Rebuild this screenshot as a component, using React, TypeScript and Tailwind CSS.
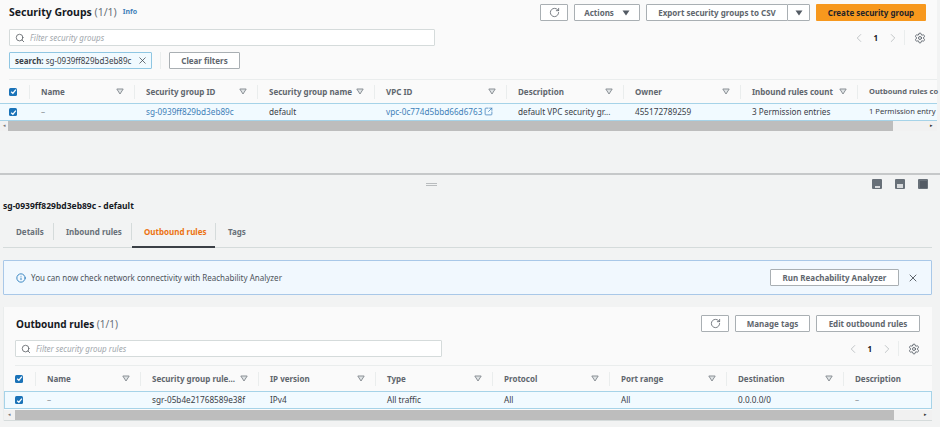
import { ChevronLeft, ChevronRight, Search, Settings, X, Info, RotateCw, SquareArrowOutUpRight } from "lucide-react";
import type { ReactNode } from "react";

function SortIcon() {
  return (
    <svg width="8" height="7" viewBox="0 0 8 7" className="shrink-0">
      <path d="M0.8 1 H7.2 L4 6 Z" fill="#dfe3e5" stroke="#8b9196" strokeWidth="1" />
    </svg>
  );
}

function Caret() {
  return (
    <svg width="8" height="6" viewBox="0 0 8 6" className="shrink-0">
      <path d="M0.5 0.5 H7.5 L4 5.5 Z" fill="#545b64" />
    </svg>
  );
}

function Check() {
  return (
    <span className="flex h-[8px] w-[8px] items-center justify-center rounded-[1.5px] bg-[#1b73b8]">
      <svg width="7" height="7" viewBox="0 0 8 8">
        <path d="M1.3 4.2 L3.3 6 L6.7 1.8" fill="none" stroke="#fff" strokeWidth="1.4" />
      </svg>
    </span>
  );
}

function Btn({ children, className }: { children: ReactNode; className: string }) {
  return (
    <button className={`flex shrink-0 items-center justify-center rounded-[1px] border border-[#a9afb3] bg-white text-[8px] font-bold text-[#60666d] ${className}`}>
      {children}
    </button>
  );
}

function FilterBox({ placeholder, className }: { placeholder: string; className: string }) {
  return (
    <div className={`flex h-[17px] items-center gap-[5px] rounded-[1px] border border-[#d5dbdb] bg-white pl-[5px] ${className}`}>
      <Search size={10} strokeWidth={2} className="text-[#5f6469]" />
      <span className="text-[8px] italic text-[#a2a8ad]">{placeholder}</span>
    </div>
  );
}

function Pager({ className }: { className: string }) {
  return (
    <div className={`flex h-[17px] items-center text-[#b6babd] ${className}`}>
      <ChevronLeft size={14} strokeWidth={1.4} />
      <span className="ml-[7px] mr-[8px] text-[8px] font-bold text-[#16191f]">1</span>
      <ChevronRight size={14} strokeWidth={1.4} />
      <span className="ml-[4px] mr-[9px] h-[15px] w-px bg-[#eaeded]" />
      <Settings size={12} strokeWidth={1.7} className="text-[#545b64]" />
    </div>
  );
}

function HeaderRow({ cols, heads, height }: { cols: string; heads: string[]; height: string }) {
  return (
    <div className={`grid items-center border-t border-[#eaeded] ${height} ${cols}`}>
      <div className="flex h-[14px] items-center">
        <Check />
      </div>
      {heads.map((h, i) => (
        <div key={h} className="flex h-[14px] items-center justify-between border-l border-[#eaeded] pl-[11px]">
          <span className={`whitespace-nowrap font-bold text-[#60666d] ${h === "Outbound rules co" ? "text-[7.5px]" : "text-[8px]"}`}>{h}</span>
          {i < heads.length - 1 && (
            <span className="pr-[10px]">
              <SortIcon />
            </span>
          )}
        </div>
      ))}
    </div>
  );
}

function Scrollbar({ left, thumb, right }: { left: string; thumb: string; right: string }) {
  return (
    <div className="flex h-[10px] items-stretch bg-[#f1f1f1]">
      <span className={`flex items-center justify-center text-[5px] text-[#777] ${left}`}>◂</span>
      <span className={`bg-[#bdbdbd] ${thumb}`} />
      <span className={`flex flex-1 items-center justify-end text-[5px] text-[#333] ${right}`}>▸</span>
    </div>
  );
}

const groupCols = "grid-cols-[20px_105px_123px_117px_132px_117px_117px_117px_69px]";
const ruleCols = "grid-cols-[20px_105px_118px_117px_117px_117px_117px_117px_77px]";

export default function App() {
  return (
    <div className="flex h-[427px] w-[940px] flex-col overflow-hidden bg-[#f2f3f3] font-['Noto_Sans',sans-serif]">
      {/* Security groups list */}
      <div className="h-[173px] shrink-0">
        <div className="mr-[3px] bg-[#fafafa] pt-[4px]">
          <div className="flex h-[17px] items-center pl-[9px] pr-[11px]">
            <h1 className="text-[10.5px] font-bold text-[#16191f]">
              Security Groups <span className="font-normal text-[#687078]">(1/1)</span>
            </h1>
            <span className="ml-[6px] text-[7px] font-bold text-[#3f7fb8]">Info</span>
            <div className="ml-auto flex gap-[6px]">
              <Btn className="h-[17px] w-[28px]">
                <RotateCw size={11} strokeWidth={1.8} />
              </Btn>
              <Btn className="h-[17px] w-[66px] gap-[8px]">
                Actions <Caret />
              </Btn>
              <div className="flex">
                <Btn className="h-[17px] w-[142px]">Export security groups to CSV</Btn>
                <Btn className="-ml-px h-[17px] w-[23px]">
                  <Caret />
                </Btn>
              </div>
              <button className="h-[17px] w-[110px] rounded-[1px] bg-[#f7981d] text-[8px] font-bold text-[#1f2328]">
                Create security group
              </button>
            </div>
          </div>

          <div className="mt-[8px] flex items-center pl-[9px] pr-[11px]">
            <FilterBox placeholder="Filter security groups" className="w-[426px]" />
            <Pager className="ml-auto" />
          </div>

          <div className="mt-[6px] flex h-[17px] items-center pl-[9px]">
            <div className="flex h-[17px] w-[143px] items-center justify-between rounded-[1px] border border-[#8fc6e2] bg-[#f1faff] pl-[5px] pr-[3px] text-[8px] text-[#3a4047]">
              <span className="whitespace-nowrap">
                <b>search:</b> sg-0939ff829bd3eb89c
              </span>
              <X size={11} strokeWidth={1.6} className="shrink-0 text-[#3a4047]" />
            </div>
            <span className="mx-[8px] h-[17px] w-px bg-[#eaeded]" />
            <Btn className="h-[17px] w-[71px]">Clear filters</Btn>
          </div>

          <div className="mt-[10px] pl-[9px]">
            <HeaderRow
              height="h-[24px]"
              cols={groupCols}
              heads={["Name", "Security group ID", "Security group name", "VPC ID", "Description", "Owner", "Inbound rules count", "Outbound rules co"]}
            />
          </div>
          <div className={`grid h-[18px] items-center border-y border-[#a6d3e8] bg-[#f1faff] pl-[9px] text-[8.2px] text-[#3a4047] ${groupCols}`}>
            <Check />
            <span className="pl-[12px] text-[#8a9096]">–</span>
            <span className="whitespace-nowrap pl-[12px] text-[#3f7fb8]">sg-0939ff829bd3eb89c</span>
            <span className="pl-[12px]">default</span>
            <span className="flex items-center gap-[2px] whitespace-nowrap pl-[12px] text-[#3f7fb8]">
              vpc-0c774d5bbd66d6763
              <SquareArrowOutUpRight size={9} strokeWidth={2} className="shrink-0" />
            </span>
            <span className="whitespace-nowrap pl-[12px]">default VPC security gr...</span>
            <span className="pl-[12px]">455172789259</span>
            <span className="pl-[12px]">3 Permission entries</span>
            <span className="whitespace-nowrap pl-[12px] text-[7.6px]">1 Permission entry</span>
          </div>
        </div>
        <div className="mr-[3px]">
          <Scrollbar left="w-[8px]" thumb="w-[885px]" right="pr-[4px]" />
        </div>
      </div>

      {/* Split panel */}
      <div className="flex h-[20px] shrink-0 items-center border-t-2 border-[#c6c8c9] pr-[12px]">
        <span className="ml-[426px] h-[3px] w-[11px] border-y border-[#b9bcbe]" />
        <div className="ml-auto flex gap-[13px]">
          {["h-[2px] w-[5px]", "h-[4px] w-[6px]", "h-[7px] w-[7px]"].map((inner) => (
            <span key={inner} className="flex h-[10px] w-[10px] items-end justify-center rounded-[1px] bg-[#687078] pb-[1px]">
              <span className={`${inner === "h-[7px] w-[7px]" ? "bg-[#545b64]" : "bg-[#d8dadc]"} ${inner}`} />
            </span>
          ))}
        </div>
      </div>

      <div className="pl-[3px] pr-[8px] pt-[7px]">
        <h2 className="h-[12px] text-[8.5px] font-bold leading-[12px] text-[#16191f]">sg-0939ff829bd3eb89c - default</h2>

        <div className="mt-[11px] flex h-[25px] items-stretch border-b border-[#d5dbdb] text-[8px] font-bold text-[#687078]">
          <div className="flex h-[17px] w-[51px] items-center border-r border-[#d5dbdb] pl-[13px]">Details</div>
          <div className="flex h-[17px] w-[78px] items-center border-r border-[#d5dbdb] pl-[12px]">Inbound rules</div>
          <div className="relative flex h-[17px] w-[84px] items-center border-r border-[#d5dbdb] pl-[12px] text-[#ec7211]">
            Outbound rules
            <span className="absolute -bottom-[8px] left-0 right-0 h-[2px] bg-[#3b4046]" />
          </div>
          <div className="flex h-[17px] items-center pl-[12px]">Tags</div>
        </div>

        <div className="mt-[12px] flex h-[35px] items-center rounded-[1px] border border-[#a9c8e8] bg-[#f1f8fe] pl-[12px] pr-[12px]">
          <Info size={10} strokeWidth={2} className="text-[#1b73b8]" />
          <span className="ml-[5px] text-[8px] text-[#4d535a]">You can now check network connectivity with Reachability Analyzer</span>
          <Btn className="ml-auto h-[17px] w-[129px]">Run Reachability Analyzer</Btn>
          <X size={12} strokeWidth={1.6} className="ml-[8px] text-[#3a4047]" />
        </div>

        <div className="mt-[12px] border-l border-[#eaeded] bg-[#fafafa]">
          <div className="flex h-[25px] items-end pl-[12px] pr-[12px]">
            <h3 className="pb-[1px] text-[10px] font-bold leading-[14px] text-[#16191f]">
              Outbound rules <span className="font-normal text-[#687078]">(1/1)</span>
            </h3>
            <div className="ml-auto flex gap-[6px]">
              <Btn className="h-[17px] w-[28px]">
                <RotateCw size={11} strokeWidth={1.8} />
              </Btn>
              <Btn className="h-[17px] w-[75px]">Manage tags</Btn>
              <Btn className="h-[17px] w-[104px]">Edit outbound rules</Btn>
            </div>
          </div>
          <div className="mt-[8px] flex items-center pl-[11px] pr-[12px]">
            <FilterBox placeholder="Filter security group rules" className="w-[427px]" />
            <Pager className="ml-auto" />
          </div>
          <div className="mt-[8px] pl-[11px]">
            <HeaderRow
              height="h-[26px]"
              cols={ruleCols}
              heads={["Name", "Security group rule...", "IP version", "Type", "Protocol", "Port range", "Destination", "Description"]}
            />
          </div>
          <div className={`grid h-[18px] items-center border border-[#a6d3e8] bg-[#f1faff] pl-[10px] text-[8.2px] text-[#3a4047] ${ruleCols}`}>
            <Check />
            <span className="pl-[12px] text-[#8a9096]">–</span>
            <span className="whitespace-nowrap pl-[12px]">sgr-05b4e21768589e38f</span>
            <span className="pl-[12px]">IPv4</span>
            <span className="pl-[12px]">All traffic</span>
            <span className="pl-[12px]">All</span>
            <span className="pl-[12px]">All</span>
            <span className="pl-[12px]">0.0.0.0/0</span>
            <span className="pl-[12px] text-[#8a9096]">–</span>
          </div>
          <div className="mt-[1px] border-b border-[#d5dbdb]">
            <Scrollbar left="w-[11px]" thumb="w-[879px]" right="pr-[5px]" />
          </div>
        </div>
      </div>
    </div>
  );
}
